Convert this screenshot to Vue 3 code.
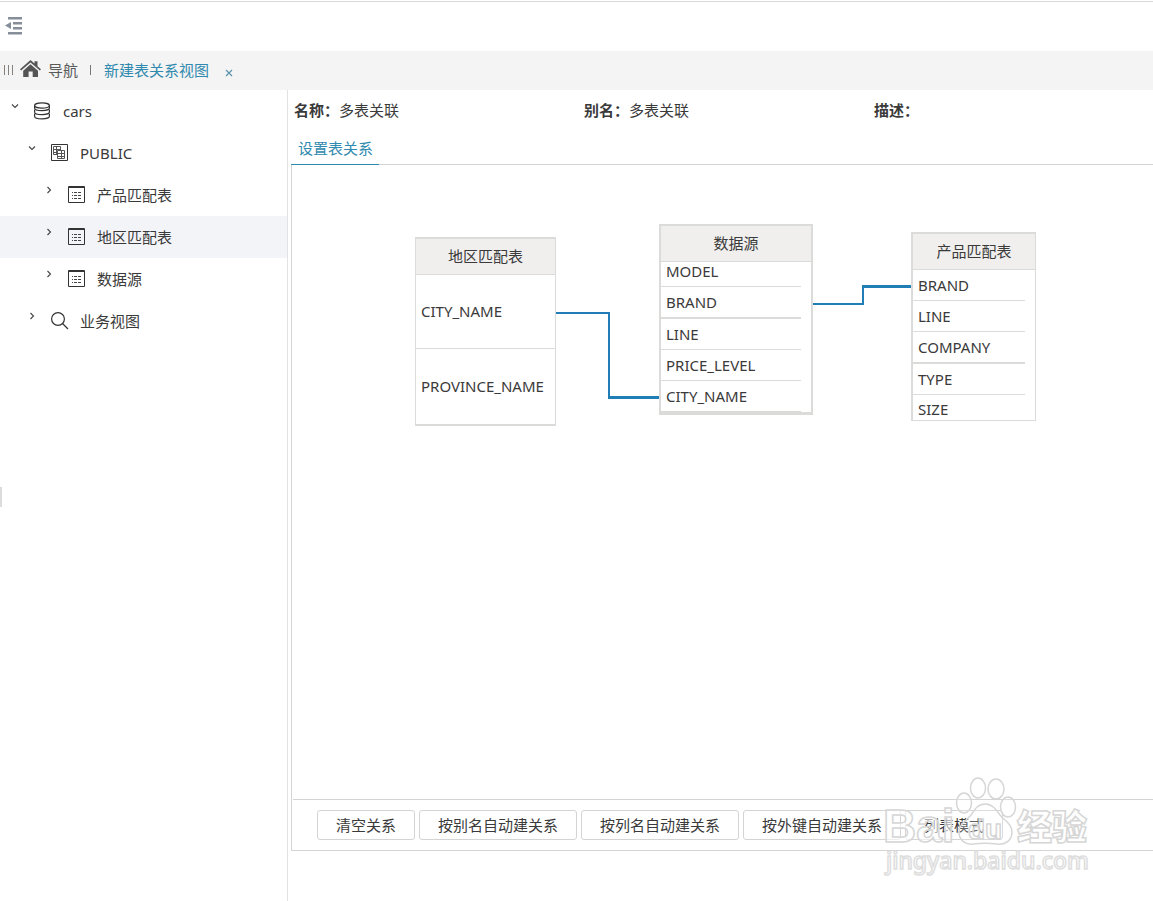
<script setup>
import { ref } from 'vue'

const tree = [
  { id: 'cars', label: 'cars', depth: 0, open: true, icon: 'database' },
  { id: 'public', label: 'PUBLIC', depth: 1, open: true, icon: 'schema' },
  { id: 'product', label: '产品匹配表', depth: 2, open: false, icon: 'table' },
  { id: 'region', label: '地区匹配表', depth: 2, open: false, icon: 'table' },
  { id: 'source', label: '数据源', depth: 2, open: false, icon: 'table' },
  { id: 'views', label: '业务视图', depth: 1, open: false, icon: 'search' },
]
const selected = ref('region')

const info = [
  { label: '名称', value: '多表关联' },
  { label: '别名', value: '多表关联' },
  { label: '描述', value: '' },
]

const nodes = [
  { id: 'region', title: '地区匹配表', x: 123, y: 72, w: 141, kind: 'roomy', fields: ['CITY_NAME', 'PROVINCE_NAME'] },
  { id: 'source', title: '数据源', x: 367, y: 59, w: 154, kind: 'scrolled', fields: ['MODEL', 'BRAND', 'LINE', 'PRICE_LEVEL', 'CITY_NAME'] },
  { id: 'product', title: '产品匹配表', x: 619, y: 67, w: 125, kind: 'clipped', fields: ['BRAND', 'LINE', 'COMPANY', 'TYPE', 'SIZE'] },
]

const actions = ['清空关系', '按别名自动建关系', '按列名自动建关系', '按外键自动建关系', '列表模式']
</script>

<template>
  <div class="page">
    <header class="top">
      <button class="plain" aria-label="收起菜单">
        <svg width="18" height="18" viewBox="0 0 18 18" fill="#868e9a">
          <path d="M3 0h14v2.500H3zM8 5h9v2.500H8zM8 10h9v2.500H8zM3 15h14v2.500H3zM0 8.500 6 5v7z" />
        </svg>
      </button>
    </header>

    <nav class="tabs">
      <svg class="grip" width="9" height="10" viewBox="0 0 9 10" stroke="#85807c">
        <path d="M.5 0v10M4.500 0v10M8.500 0v10" />
      </svg>
      <svg class="home" width="21" height="18" viewBox="0 0 21 18" fill="#555">
        <path d="M10.500 0 14.500 3.600V1.200H17.500V6.200L21 9.300 19.900 10.600 10.500 2.500 1.100 10.600 0 9.300z" />
        <path d="M10.500 4.200 18 10.700V17H12.700V11.500H8.600V17H3.200V10.700z" />
      </svg>
      <a class="nav-home" href="#">导航</a>
      <span class="sep"></span>
      <a class="nav-current" href="#">新建表关系视图</a>
      <button class="plain close" aria-label="关闭">
        <svg width="8" height="8" viewBox="0 0 8 8" stroke="#5b93aa" stroke-width="1.200">
          <path d="M1 1 7 7M7 1 1 7" />
        </svg>
      </button>
    </nav>

    <div class="body">
      <aside class="side">
        <ul class="tree">
          <li
            v-for="n in tree"
            :key="n.id"
            class="row"
            :class="{ active: n.id === selected }"
            :style="{ paddingLeft: 11 + n.depth * 17 + 'px' }"
            @click="selected = n.id"
          >
            <button class="plain caret" :aria-label="n.open ? '折叠' : '展开'">
              <svg width="8" height="8" viewBox="0 0 8 8" fill="none" stroke="#444" stroke-width="1.100">
                <path v-if="n.open" d="M1 2.500 4 5.500 7 2.500" />
                <path v-else d="M2.500 1 5.500 4 2.500 7" />
              </svg>
            </button>
            <svg class="icon" width="18" height="18" viewBox="0 0 18 18" fill="none" stroke="#333">
              <g v-if="n.icon === 'database'" stroke-width="1.200">
                <ellipse cx="8" cy="3.500" rx="7.400" ry="2.700" />
                <path d="M.6 3.500V6c0 1.500 3.300 2.700 7.400 2.700S15.400 7.500 15.400 6V3.500M.6 7.700V10c0 1.500 3.300 2.700 7.400 2.700s7.400-1.200 7.400-2.700V7.700M.6 11.700v2.500c0 1.500 3.300 2.700 7.400 2.700s7.400-1.200 7.400-2.700v-2.500" />
              </g>
              <g v-else-if="n.icon === 'schema'">
                <path d="M.5.5h16v16H.5z" />
                <path stroke="#555" d="M6.500 10.500h-4v-8h7v4M2.500 5.500h7M2.500 8.500h4M5.500 2.500v8M6.500 6.500h7v8h-7zM6.500 9.500h7M6.500 12.500h7M10.500 6.500v8" />
              </g>
              <g v-else-if="n.icon === 'table'">
                <path d="M.5.5h16v16H.5zM1 1.500h15" />
                <path stroke="#444" d="M4 6.500h1M6 6.500h3M10 6.500h3M4 9.500h1M6 9.500h3M10 9.500h3M4 12.500h1M6 12.500h3M10 12.500h3" />
              </g>
              <g v-else stroke-width="1.200">
                <circle cx="7" cy="7" r="6.400" />
                <path d="M11.500 11.500 17 17" />
              </g>
            </svg>
            <span>{{ n.label }}</span>
          </li>
        </ul>
        <span class="handle"></span>
      </aside>

      <main class="main">
        <dl class="info">
          <div v-for="i in info" :key="i.label">
            <dt>{{ i.label }}：</dt>
            <dd>{{ i.value }}</dd>
          </div>
        </dl>
        <div class="subtabs">
          <button class="plain subtab">设置表关系</button>
        </div>

        <section class="panel">
          <div class="canvas">
            <svg class="links" width="860" height="300" fill="none" stroke="#217db5">
              <path stroke-width="2" d="M264 148H317V233" />
              <path stroke-width="3" d="M316 232.500H367" />
              <path stroke-width="2" d="M521 139H571V120" />
              <path stroke-width="3" d="M570 121.500H619" />
            </svg>
            <article
              v-for="n in nodes"
              :key="n.id"
              class="node"
              :class="n.kind"
              :style="{ left: n.x + 'px', top: n.y + 'px', width: n.w + 'px' }"
            >
              <h3>{{ n.title }}</h3>
              <ul>
                <li v-for="f in n.fields" :key="f">{{ f }}</li>
              </ul>
            </article>
          </div>
          <div class="actions">
            <button v-for="a in actions" :key="a">{{ a }}</button>
          </div>
        </section>
      </main>
    </div>

    <svg class="mark" width="212" height="104" viewBox="0 0 212 104" fill="#fff" fill-opacity=".6" stroke="#d6d6d6" stroke-width="1.500">
      <text class="m-latin" x="1" y="69">Bai</text>
      <g fill-opacity=".2">
        <ellipse cx="96" cy="15" rx="7.500" ry="10" />
        <ellipse cx="114" cy="16" rx="8" ry="10" />
        <ellipse cx="82" cy="30" rx="7.500" ry="10" />
        <ellipse cx="126" cy="34" rx="7.500" ry="10" />
        <path d="M103 31c-7 0-10 5-14 11-5 6-12 9-12 17 0 8 6 13 14 12 8-1 16-1 24 0 9 1 15-4 15-12 0-8-7-11-12-17-4-6-8-11-15-11z" />
        <text class="m-du" x="86" y="66">du</text>
      </g>
      <text class="m-cjk" x="135" y="67">经验</text>
      <text class="m-url" x="4" y="96" stroke="#dedede">jingyan.baidu.com</text>
    </svg>
  </div>
</template>

<style>
body {
  margin: 0;
  background: #fff;
}
</style>

<style scoped>
.page {
  position: relative;
  display: flex;
  flex-direction: column;
  min-height: 100vh;
  overflow: hidden;
  font: 15px/20px "Noto Sans", "Noto Sans CJK SC", sans-serif;
  color: #3a3a3a;
}
.page * {
  box-sizing: border-box;
}
svg {
  display: block;
  flex: none;
}
ul, dl, dd, h3 {
  margin: 0;
  padding: 0;
  list-style: none;
}
button {
  font: inherit;
  color: inherit;
  cursor: pointer;
}
.plain {
  padding: 0;
  border: 0;
  background: none;
}
a {
  text-decoration: none;
}
.top {
  display: flex;
  align-items: center;
  height: 50px;
  margin-top: 1px;
  padding: 0 5px 1px;
  border-top: 1px solid #d9d9d9;
}
.tabs {
  display: flex;
  align-items: center;
  height: 39px;
  padding: 0 4px 1px;
  background: #f4f4f4;
}
.home {
  margin: 0 7px;
  margin-bottom: 2px;
}
.nav-home {
  color: #5a5a5a;
}
.sep {
  width: 1px;
  height: 10px;
  margin: 0 13px 0 12px;
  background: #777;
}
.nav-current {
  color: #3089ae;
}
.close {
  margin: 6px 0 0 16px;
}
.body {
  display: flex;
  flex: 1;
}
.side {
  position: relative;
  flex: none;
  width: 288px;
  border-right: 1px solid #e2e2e4;
}
.row {
  display: flex;
  align-items: center;
  height: 42px;
}
.row.active {
  background: #f3f4f8;
}
.caret {
  margin-bottom: 10px;
}
.icon {
  margin: 0 11px 0 15px;
}
.handle {
  position: absolute;
  left: 0;
  top: 49%;
  width: 2px;
  height: 20px;
  background: #dcdcdc;
}
.main {
  display: flex;
  flex: 1;
  flex-direction: column;
  min-width: 0;
  padding: 0 0 50px 3px;
}
.info {
  display: flex;
  height: 42px;
  padding: 0 3px 2px;
}
.info div {
  display: flex;
  flex: none;
  align-items: center;
  width: 290px;
}
.info dt {
  font-weight: 700;
}
.subtabs {
  display: flex;
  height: 33px;
  margin-bottom: -1px;
}
.subtab {
  z-index: 1;
  padding: 0 6px 0 7px;
  border-bottom: 1px solid #3089ae;
  color: #3089ae;
}
.panel {
  display: flex;
  flex: 1;
  flex-direction: column;
  border: 1px solid #d4d4d4;
  border-right: 0;
}
.canvas {
  position: relative;
  flex: 1;
  min-height: 300px;
}
.links {
  position: absolute;
  left: 0;
  top: 0;
}
.node {
  position: absolute;
  border: 1px solid #dbdbd9;
  border-top-width: 2px;
  background: #fff;
}
.node h3 {
  height: 36px;
  border-bottom: 1px solid #dbdbd9;
  background: #f0efee;
  font-size: 15px;
  font-weight: 400;
  line-height: 35px;
  text-align: center;
}
.node ul {
  display: flex;
  flex-direction: column;
  height: 150px;
  overflow: hidden;
}
.node li {
  display: flex;
  flex: 0 0 31px;
  align-items: center;
  margin-right: 10px;
  padding: 0 0 1px 5px;
  border-bottom: 1px solid #dbdbd9;
}
.node.roomy {
  border-bottom-width: 2px;
}
.node.roomy ul {
  height: 149px;
}
.node.roomy li {
  flex-basis: 74px;
  margin-right: 0;
}
.node.roomy li:last-child {
  border-bottom: 0;
}
.node.scrolled {
  border-width: 2px;
  border-bottom-width: 3px;
}
.node.scrolled ul {
  justify-content: flex-end;
}
.node.scrolled li:nth-child(2),
.node.clipped li:nth-child(3) {
  flex-basis: 32px;
  border-bottom-width: 2px;
}
.node.clipped {
  border-left-width: 2px;
}
.node.clipped li:last-child {
  padding-bottom: 4px;
  border-bottom: 0;
}
.actions {
  display: flex;
  gap: 4px;
  align-items: center;
  height: 51px;
  margin-left: 1px;
  padding-left: 24px;
  border-top: 1px solid #d4d4d4;
}
.actions button {
  flex: none;
  height: 30px;
  padding: 0 18px;
  border: 1px solid #d4d4d4;
  border-radius: 3px;
  background: #fff;
}
.mark {
  position: absolute;
  right: 59px;
  bottom: 24px;
  pointer-events: none;
}
.m-latin {
  font: 700 46px "Liberation Sans", sans-serif;
}
.m-du {
  font: 700 28px "Liberation Sans", sans-serif;
}
.m-cjk {
  font: 900 35px "Noto Sans CJK SC", sans-serif;
}
.m-url {
  font: 500 23px "Noto Sans", sans-serif;
}
</style>
